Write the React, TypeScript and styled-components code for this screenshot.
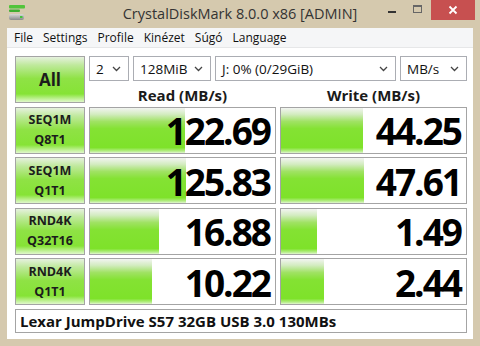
import React from 'react';
import styled, { createGlobalStyle } from 'styled-components';

const GlobalStyle = createGlobalStyle`
  body {
    margin: 0;
    background: #d5c9ae;
  }
`;

const FRAME = '#d5c9ae';
const UI_FONT = `"Open Sans", "Noto Sans", "DejaVu Sans", sans-serif`;

const Window = styled.div`
  width: 480px;
  height: 346px;
  background: ${FRAME};
  display: flex;
  flex-direction: column;
  font-family: ${UI_FONT};
  color: #1a1a1a;
  overflow: hidden;
`;

const TitleBar = styled.div`
  height: 28px;
  flex: none;
  display: grid;
  grid-template-columns: 1fr auto 1fr;
  align-items: start;
`;

const AppIcon = styled.svg`
  margin: 5px 0 0 9px;
  display: block;
`;

const Title = styled.div`
  font-size: 14.5px;
  line-height: 28px;
  color: #333;
`;

const Controls = styled.div`
  display: flex;
  justify-content: flex-end;
  align-items: flex-start;
`;

const CtrlButton = styled.div<{ $close?: boolean }>`
  width: ${(p) => (p.$close ? '44px' : '26px')};
  height: 20px;
  margin-right: ${(p) => (p.$close ? '5px' : '0')};
  background: ${(p) => (p.$close ? '#c75050' : 'transparent')};
  display: flex;
  align-items: center;
  justify-content: center;
`;

const Client = styled.div`
  flex: 1;
  margin: 0 7px 7px;
  background: #fff;
  display: flex;
  flex-direction: column;
`;

const MenuBar = styled.div`
  height: 19px;
  background: #f5f6f7;
  border-bottom: 1px solid #e6e7e8;
  display: flex;
  align-items: center;
  padding-left: 7px;
  gap: 10px;
  font-size: 12px;
  color: #111;
`;

const Board = styled.div`
  padding: 8px 0 0 8px;
  display: grid;
  grid-template-columns: 70px 187px 187px;
  grid-template-rows: repeat(5, 47px) 24px;
  column-gap: 4px;
  row-gap: 3.5px;
`;

const GreenButton = styled.div<{ $big?: boolean }>`
  box-sizing: border-box;
  border: 1px solid #a4a4a4;
  background: linear-gradient(
    to bottom,
    #e6f1de 0%,
    #bfe99c 18%,
    #8fe245 48%,
    #86e336 82%,
    #c4f29c 94%,
    #e0f7cc 100%
  );
  display: flex;
  flex-direction: column;
  align-items: center;
  justify-content: center;
  font-weight: 700;
  font-size: ${(p) => (p.$big ? '17px' : '12.5px')};
  line-height: 20px;
  color: #1c1c1c;
`;

const TopRight = styled.div`
  grid-column: 2 / 4;
  display: flex;
  flex-direction: column;
`;

const SelectRow = styled.div`
  display: flex;
  gap: 4px;
`;

const Select = styled.div<{ $w: number }>`
  box-sizing: border-box;
  width: ${(p) => p.$w}px;
  height: 25px;
  border: 1px solid #abadb3;
  background: #fff;
  display: flex;
  align-items: center;
  justify-content: space-between;
  padding: 0 7px 0 6px;
  font-size: 13.5px;
  color: #111;
`;

const Headers = styled.div`
  flex: 1;
  display: grid;
  grid-template-columns: 187px 187px;
  column-gap: 4px;
  align-items: center;
  padding-top: 4px;
`;

const Header = styled.div`
  text-align: center;
  font-weight: 700;
  font-size: 15px;
`;

const Cell = styled.div`
  position: relative;
  box-sizing: border-box;
  border: 1px solid #a4a4a4;
  background: #fff;
  display: flex;
  align-items: center;
  justify-content: flex-end;
  padding: 1px 5px 0 0;
`;

const Bar = styled.div`
  position: absolute;
  left: 0;
  top: 0;
  bottom: 0;
  background: linear-gradient(
    to bottom,
    #f2f4f1 0%,
    #d3ecc0 14%,
    #a0e264 30%,
    #84e233 46%,
    #7ee22a 88%,
    #b6ee88 96%,
    #e2f6d2 100%
  );
`;

const Value = styled.div`
  position: relative;
  font-weight: 700;
  font-size: 37px;
  letter-spacing: -2px;
  line-height: 1;
  color: #000;
`;

const Comment = styled.div`
  grid-column: 1 / -1;
  box-sizing: border-box;
  border: 1px solid #a4a4a4;
  display: flex;
  align-items: center;
  padding-left: 4px;
  font-weight: 700;
  font-size: 15px;
  color: #111;
`;

const Chevron = () => (
  <svg width="9" height="6" viewBox="0 0 9 6">
    <path d="M1 1 L4.5 4.5 L8 1" stroke="#444" strokeWidth="1.3" fill="none" />
  </svg>
);

const results = [
  { name: 'SEQ1M', sub: 'Q8T1', read: 122.69, write: 44.25 },
  { name: 'SEQ1M', sub: 'Q1T1', read: 125.83, write: 47.61 },
  { name: 'RND4K', sub: 'Q32T16', read: 16.88, write: 1.49 },
  { name: 'RND4K', sub: 'Q1T1', read: 10.22, write: 2.44 },
];

// CrystalDiskMark bar scale: log10(value * 10) / 6 of the cell
const barWidth = (v: number) => `${(Math.log10(v * 10) / 6) * 100}%`;

const menus = ['File', 'Settings', 'Profile', 'Kinézet', 'Súgó', 'Language'];

export default function App() {
  return (
    <>
      <GlobalStyle />
      <Window>
        <TitleBar>
          <AppIcon width="16" height="16" viewBox="0 0 16 16">
            <defs>
              <linearGradient id="drv" x1="0" y1="0" x2="0" y2="1">
                <stop offset="0" stopColor="#d8d8d8" />
                <stop offset="1" stopColor="#8a8a8a" />
              </linearGradient>
            </defs>
            <rect x="0" y="0" width="16" height="3.5" rx="1" fill="#52c43a" />
            <rect x="0" y="4.5" width="11" height="2.5" rx="1" fill="#3fae32" />
            <rect x="0" y="9" width="15" height="6" rx="2" fill="url(#drv)" />
            <rect x="11" y="11" width="2.5" height="2" fill="#44c23a" />
          </AppIcon>
          <Title>CrystalDiskMark 8.0.0 x86 [ADMIN]</Title>
          <Controls>
            <CtrlButton>
              <svg width="10" height="10" viewBox="0 0 10 10">
                <rect x="1" y="6" width="8" height="2" fill="#333" />
              </svg>
            </CtrlButton>
            <CtrlButton>
              <svg width="10" height="10" viewBox="0 0 10 10">
                <rect x="0.5" y="0.5" width="8" height="7" fill="none" stroke="#666" strokeWidth="1" />
                <rect x="0.5" y="0.5" width="8" height="1.5" fill="#666" />
              </svg>
            </CtrlButton>
            <CtrlButton $close>
              <svg width="10" height="10" viewBox="0 0 10 10">
                <path d="M1.5 1.5 L8.5 8.5 M8.5 1.5 L1.5 8.5" stroke="#fff" strokeWidth="1.8" />
              </svg>
            </CtrlButton>
          </Controls>
        </TitleBar>
        <Client>
          <MenuBar>
            {menus.map((m) => (
              <span key={m}>{m}</span>
            ))}
          </MenuBar>
          <Board>
            <GreenButton $big>All</GreenButton>
            <TopRight>
              <SelectRow>
                <Select $w={40}>
                  <span>2</span>
                  <Chevron />
                </Select>
                <Select $w={78}>
                  <span>128MiB</span>
                  <Chevron />
                </Select>
                <Select $w={181}>
                  <span>J: 0% (0/29GiB)</span>
                  <Chevron />
                </Select>
                <Select $w={67}>
                  <span>MB/s</span>
                  <Chevron />
                </Select>
              </SelectRow>
              <Headers>
                <Header>Read (MB/s)</Header>
                <Header>Write (MB/s)</Header>
              </Headers>
            </TopRight>
            {results.map((r, i) => (
              <React.Fragment key={i}>
                <GreenButton>
                  <span>{r.name}</span>
                  <span>{r.sub}</span>
                </GreenButton>
                <Cell>
                  <Bar style={{ width: barWidth(r.read) }} />
                  <Value>{r.read.toFixed(2)}</Value>
                </Cell>
                <Cell>
                  <Bar style={{ width: barWidth(r.write) }} />
                  <Value>{r.write.toFixed(2)}</Value>
                </Cell>
              </React.Fragment>
            ))}
            <Comment>Lexar JumpDrive S57 32GB USB 3.0 130MBs</Comment>
          </Board>
        </Client>
      </Window>
    </>
  );
}
